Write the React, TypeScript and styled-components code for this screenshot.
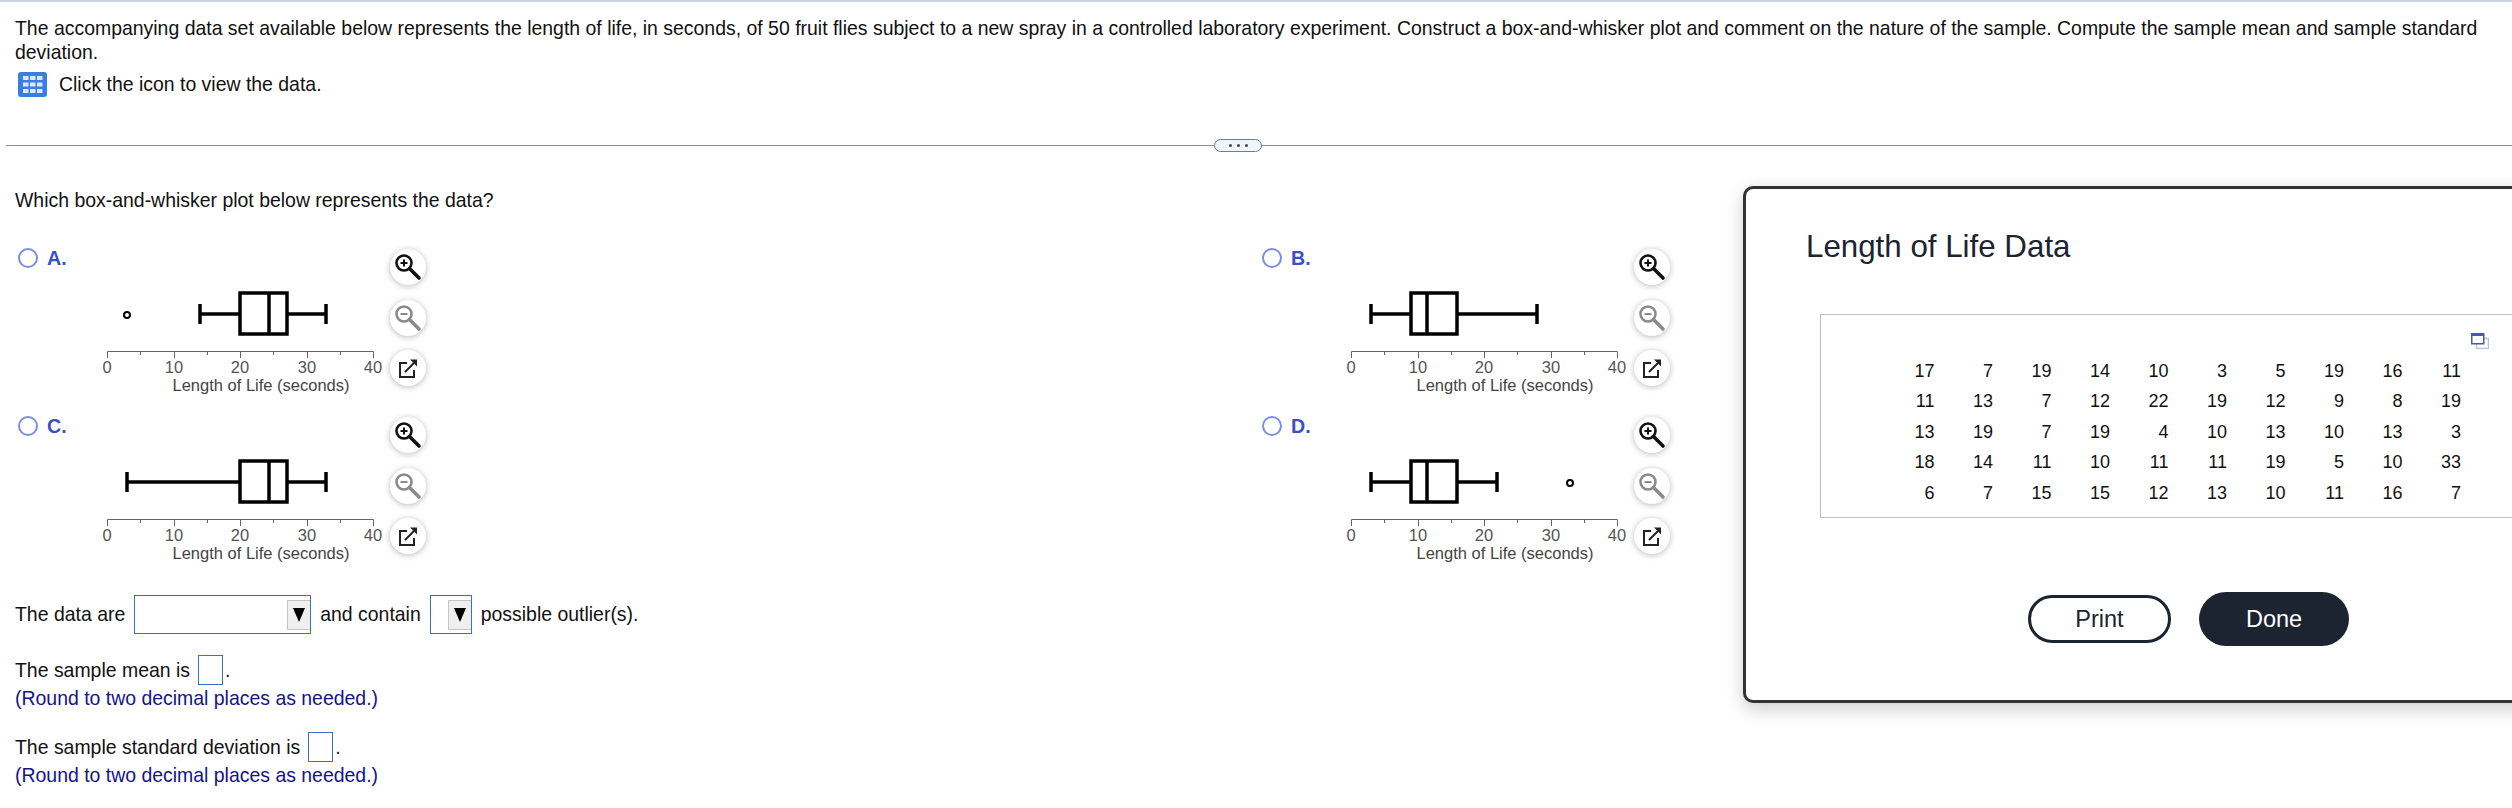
import styled, { createGlobalStyle } from 'styled-components';

const GlobalStyle = createGlobalStyle`
  html, body {
    margin: 0;
    padding: 0;
    background: #fff;
    overflow: hidden;
  }
  body {
    font-family: 'Liberation Sans', Arial, sans-serif;
    font-size: 19.45px;
    color: #111;
  }
`;

const Page = styled.div`
  position: relative;
  width: 2512px;
  height: 808px;
  overflow: hidden;
  border-top: 2px solid #ccd5e3;
  box-sizing: border-box;
`;

const Prompt = styled.div`
  padding: 14px 15px 0;
  line-height: 24px;
`;

const ClickRow = styled.div`
  display: flex;
  align-items: center;
  gap: 12px;
  margin: 8px 0 0 18px;
  height: 25px;
`;

const Divider = styled.div`
  position: relative;
  margin: 48px 0 0 6px;
  height: 1px;
  background: #8a8f9c;
`;

const DividerHandle = styled.div`
  position: absolute;
  left: 1208px;
  top: -6px;
  width: 46px;
  height: 11px;
  display: flex;
  align-items: center;
  justify-content: center;
  gap: 5px;
  background: #f1f4f8;
  border: 1px solid #6f7c8c;
  border-radius: 7px;
`;

const Dot = styled.span`
  width: 3px;
  height: 3px;
  border-radius: 50%;
  background: #444;
`;

const Question = styled.div`
  margin: 42px 0 0 15px;
  line-height: 24px;
`;

const OptionGrid = styled.div`
  display: grid;
  grid-template-columns: 1244px 1244px;
  grid-auto-rows: 168px;
  margin: 36px 0 0 18px;
`;

const Option = styled.div`
  display: flex;
  align-items: flex-start;
`;

const Radio = styled.span`
  width: 20px;
  height: 20px;
  box-sizing: border-box;
  border: 2px solid #7c8fdc;
  border-radius: 50%;
  background: #fff;
`;

const OptionLabel = styled.span`
  width: 33px;
  margin-left: 9px;
  font-size: 19.6px;
  font-weight: 700;
  line-height: 20px;
  color: #3a50c4;
`;

const IconColumn = styled.div`
  display: flex;
  flex-direction: column;
  gap: 14.5px;
  margin-top: 1px;
`;

const IconButton = styled.span`
  width: 36px;
  height: 36px;
  display: flex;
  align-items: center;
  justify-content: center;
  background: #fff;
  border-radius: 50%;
  box-shadow: 0 1px 6px rgba(0, 0, 0, 0.28);
`;

const AnswerRow = styled.div`
  display: flex;
  align-items: center;
  margin: 11px 0 0 15px;
  height: 39px;
`;

const AnswerText = styled.span`
  margin-right: 9px;
`;

const SelectBox = styled.span<{ $width: number }>`
  width: ${(p) => p.$width}px;
  height: 39px;
  box-sizing: border-box;
  display: flex;
  align-items: center;
  justify-content: flex-end;
  margin-right: 9px;
  border: 1px solid #3b6fc9;
`;

const SelectArrow = styled.span`
  width: 23px;
  height: 30px;
  box-sizing: border-box;
  display: flex;
  align-items: center;
  justify-content: center;
  background: #efefef;
  border: 1px solid #c4c4c4;
  border-right: none;

  &::before {
    content: '';
    border-left: 6.5px solid transparent;
    border-right: 6.5px solid transparent;
    border-top: 14px solid #000;
  }
`;

const FillBlock = styled.div<{ $top: number }>`
  margin: ${(p) => p.$top}px 0 0 15px;
`;

const FillRow = styled.div`
  display: flex;
  align-items: center;
  height: 30px;
`;

const BlankInput = styled.span`
  width: 25px;
  height: 30px;
  box-sizing: border-box;
  margin: 0 2px 0 8px;
  border: 1px solid #3b6fc9;
`;

const Hint = styled.div`
  line-height: 24px;
  margin-top: 1px;
  color: #14148c;
`;

const Dialog = styled.div`
  position: absolute;
  left: 1743px;
  top: 184px;
  width: 820px;
  height: 517px;
  box-sizing: border-box;
  padding: 40px 0 0 60px;
  background: #fff;
  border: 3px solid #333;
  border-radius: 10px;
  box-shadow: 0 6px 18px rgba(0, 0, 0, 0.2);
`;

const DialogTitle = styled.div`
  font-size: 31.3px;
  line-height: 36px;
  color: #1c2331;
`;

const DataBox = styled.div`
  position: relative;
  height: 204px;
  box-sizing: border-box;
  margin: 49px 0 0 14px;
  padding: 41px 0 0 55px;
  border: 1px solid #bbb;
`;

const CopyIcon = styled.svg`
  position: absolute;
  left: 650px;
  top: 18px;
`;

const DataGrid = styled.div`
  display: grid;
  grid-template-columns: repeat(10, 58.5px);
  grid-auto-rows: 30.5px;
  align-items: center;
  justify-items: end;
  font-size: 18px;
`;

const DialogButtons = styled.div`
  display: flex;
  align-items: center;
  gap: 28px;
  margin: 74px 0 0 222px;
`;

const PrintButton = styled.span`
  width: 143px;
  height: 48px;
  box-sizing: border-box;
  display: flex;
  align-items: center;
  justify-content: center;
  border: 3px solid #1c2331;
  border-radius: 24px;
  font-size: 23.5px;
  color: #1c2331;
`;

const DoneButton = styled.span`
  width: 150px;
  height: 54px;
  display: flex;
  align-items: center;
  justify-content: center;
  background: #1c2331;
  border-radius: 27px;
  font-size: 23.5px;
  color: #fff;
`;

const UNIT = 6.65;
const AXIS_X = 27;
const AXIS_Y = 103;
const BOX_TOP = 45;
const BOX_BOTTOM = 86;
const MID_Y = 66;

type PlotData = {
  low: number;
  q1: number;
  median: number;
  q3: number;
  high: number;
  outlier?: number;
};

const px = (v: number) => Math.round(AXIS_X + v * UNIT);

const BoxPlot = ({ low, q1, median, q3, high, outlier }: PlotData) => (
  <svg width="310" height="150" viewBox="0 0 310 150" style={{ display: 'block' }}>
    <g stroke="#000" strokeWidth="3.5" fill="none">
      <line x1={px(low)} x2={px(q1)} y1={MID_Y} y2={MID_Y} />
      <line x1={px(q3)} x2={px(high)} y1={MID_Y} y2={MID_Y} />
      <line x1={px(low)} x2={px(low)} y1={MID_Y - 10} y2={MID_Y + 10} />
      <line x1={px(high)} x2={px(high)} y1={MID_Y - 10} y2={MID_Y + 10} />
      <rect x={px(q1)} y={BOX_TOP} width={px(q3) - px(q1)} height={BOX_BOTTOM - BOX_TOP} />
      <line x1={px(median)} x2={px(median)} y1={BOX_TOP} y2={BOX_BOTTOM} />
    </g>
    {outlier !== undefined && (
      <circle cx={px(outlier)} cy={MID_Y + 1} r="3" fill="none" stroke="#000" strokeWidth="2" />
    )}
    <path
      d={`M${px(0) + 0.5} ${AXIS_Y + 7}V${AXIS_Y + 0.5}H${px(40) + 0.5}V${AXIS_Y + 7}`}
      fill="none"
      stroke="#666"
    />
    {[5, 10, 15, 20, 25, 30, 35].map((v) => (
      <line
        key={v}
        x1={px(v) + 0.5}
        x2={px(v) + 0.5}
        y1={AXIS_Y}
        y2={AXIS_Y + (v % 10 === 0 ? 7 : 4)}
        stroke="#666"
      />
    ))}
    <g fontFamily="'Liberation Sans', Arial, sans-serif" fontSize="16.5" fill="#555" textAnchor="middle">
      {[0, 10, 20, 30, 40].map((v) => (
        <text key={v} x={px(v)} y={AXIS_Y + 22}>
          {v}
        </text>
      ))}
    </g>
    <text
      x={px(20) + 21}
      y={AXIS_Y + 40}
      fontFamily="'Liberation Sans', Arial, sans-serif"
      fontSize="16.5"
      fill="#444"
      textAnchor="middle"
    >
      Length of Life (seconds)
    </text>
  </svg>
);

const ZoomIcon = ({ plus, color }: { plus: boolean; color: string }) => (
  <svg width="28" height="28" viewBox="0 0 28 28" fill="none" stroke={color}>
    <circle cx="10" cy="10" r="7.5" strokeWidth="2.6" />
    <line x1="15.5" y1="15.5" x2="25" y2="25" strokeWidth="3.6" strokeLinecap="round" />
    <line x1="6.5" y1="10" x2="13.5" y2="10" strokeWidth="2" />
    {plus && <line x1="10" y1="6.5" x2="10" y2="13.5" strokeWidth="2" />}
  </svg>
);

const ExportIcon = () => (
  <svg width="22" height="22" viewBox="0 0 22 22" fill="none" stroke="#222">
    <path d="M10 6H3V20H17V13" strokeWidth="2" />
    <path d="M8 15L17 6" strokeWidth="2" />
    <path d="M13 2.5H20V9.5Z" fill="#222" stroke="none" />
  </svg>
);

const TableIcon = () => (
  <svg width="29" height="25" viewBox="0 0 29 25">
    <rect width="29" height="25" rx="3" fill="#3b7de0" />
    {[4, 10.5, 17].map((y) =>
      [5, 12, 19].map((x) => <rect key={`${x}-${y}`} x={x} y={y} width="5.5" height="4" fill="#dbe8fb" />)
    )}
  </svg>
);

const options: { label: string; plot: PlotData }[] = [
  { label: 'A.', plot: { low: 14, q1: 20, median: 24.3, q3: 27, high: 33, outlier: 3 } },
  { label: 'B.', plot: { low: 3, q1: 9, median: 11.5, q3: 16, high: 28 } },
  { label: 'C.', plot: { low: 3, q1: 20, median: 24.3, q3: 27, high: 33 } },
  { label: 'D.', plot: { low: 3, q1: 9, median: 11.5, q3: 16, high: 22, outlier: 33 } },
];

const data = [
  17, 7, 19, 14, 10, 3, 5, 19, 16, 11,
  11, 13, 7, 12, 22, 19, 12, 9, 8, 19,
  13, 19, 7, 19, 4, 10, 13, 10, 13, 3,
  18, 14, 11, 10, 11, 11, 19, 5, 10, 33,
  6, 7, 15, 15, 12, 13, 10, 11, 16, 7,
];

export default function App() {
  return (
    <Page>
      <GlobalStyle />
      <Prompt>
        The accompanying data set available below represents the length of life, in seconds, of 50 fruit flies
        subject to a new spray in a controlled laboratory experiment. Construct a box-and-whisker plot and comment
        on the nature of the sample. Compute the sample mean and sample standard deviation.
      </Prompt>
      <ClickRow>
        <TableIcon />
        Click the icon to view the data.
      </ClickRow>
      <Divider>
        <DividerHandle>
          <Dot />
          <Dot />
          <Dot />
        </DividerHandle>
      </Divider>
      <Question>Which box-and-whisker plot below represents the data?</Question>
      <OptionGrid>
        {options.map(({ label, plot }) => (
          <Option key={label}>
            <Radio />
            <OptionLabel>{label}</OptionLabel>
            <BoxPlot {...plot} />
            <IconColumn>
              <IconButton>
                <ZoomIcon plus color="#111" />
              </IconButton>
              <IconButton>
                <ZoomIcon plus={false} color="#8a8a8a" />
              </IconButton>
              <IconButton>
                <ExportIcon />
              </IconButton>
            </IconColumn>
          </Option>
        ))}
      </OptionGrid>
      <AnswerRow>
        <AnswerText>The data are</AnswerText>
        <SelectBox $width={177}>
          <SelectArrow />
        </SelectBox>
        <AnswerText>and contain</AnswerText>
        <SelectBox $width={42}>
          <SelectArrow />
        </SelectBox>
        <span>possible outlier(s).</span>
      </AnswerRow>
      <FillBlock $top={21}>
        <FillRow>
          The sample mean is
          <BlankInput />.
        </FillRow>
        <Hint>(Round to two decimal places as needed.)</Hint>
      </FillBlock>
      <FillBlock $top={22}>
        <FillRow>
          The sample standard deviation is
          <BlankInput />.
        </FillRow>
        <Hint>(Round to two decimal places as needed.)</Hint>
      </FillBlock>
      <Dialog>
        <DialogTitle>Length of Life Data</DialogTitle>
        <DataBox>
          <CopyIcon width="18" height="16" viewBox="0 0 18 16" fill="none">
            <rect x="5.5" y="5.5" width="12" height="10" stroke="#b9bfdc" strokeWidth="1.5" />
            <rect x="0.75" y="0.75" width="12" height="10" fill="#fff" stroke="#4a5aa8" strokeWidth="1.5" />
            <line x1="1" y1="2" x2="13" y2="2" stroke="#4a5aa8" strokeWidth="2" />
          </CopyIcon>
          <DataGrid>
            {data.map((v, i) => (
              <span key={i}>{v}</span>
            ))}
          </DataGrid>
        </DataBox>
        <DialogButtons>
          <PrintButton>Print</PrintButton>
          <DoneButton>Done</DoneButton>
        </DialogButtons>
      </Dialog>
    </Page>
  );
}
